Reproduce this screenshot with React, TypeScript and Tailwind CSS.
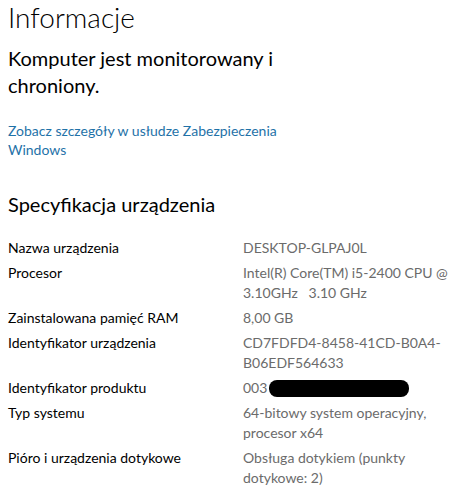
const specs: { label: string; value: string[]; redacted?: boolean }[] = [
  { label: "Nazwa urządzenia", value: ["DESKTOP-GLPAJ0L"] },
  { label: "Procesor", value: ["Intel(R) Core(TM) i5-2400 CPU @", "3.10GHz   3.10 GHz"] },
  { label: "Zainstalowana pamięć RAM", value: ["8,00 GB"] },
  { label: "Identyfikator urządzenia", value: ["CD7FDFD4-8458-41CD-B0A4-", "B06EDF564633"] },
  { label: "Identyfikator produktu", value: ["003"], redacted: true },
  { label: "Typ systemu", value: ["64-bitowy system operacyjny,", "procesor x64"] },
  { label: "Pióro i urządzenia dotykowe", value: ["Obsługa dotykiem (punkty", "dotykowe: 2)"] },
];

export default function App() {
  return (
    <div className="h-[495px] w-[456px] overflow-hidden bg-white pl-2 font-['Lato','Segoe_UI',sans-serif] text-black">
      <h1 className="text-[28px] font-light leading-[34px]">Informacje</h1>

      <p className="mt-[11px] text-[20px] leading-[27px]">
        Komputer jest monitorowany i
        <br />
        chroniony.
      </p>

      <a className="mt-[22px] block text-[14px] leading-[19px] text-[#1f72a8]" href="#">
        Zobacz szczegóły w usłudze Zabezpieczenia
        <br />
        Windows
      </a>

      <h2 className="mt-[32px] text-[20px] leading-[27px]">Specyfikacja urządzenia</h2>

      <div className="mt-[20px] flex flex-col gap-[5px] text-[14px] leading-[20px]">
        {specs.map((row) => (
          <div key={row.label} className="flex">
            <div className="w-[235px] shrink-0">{row.label}</div>
            <div className="whitespace-pre text-[#6b6b6b]">
              {row.redacted ? (
                <div className="flex items-center">
                  <span>{row.value[0]}</span>
                  <span className="ml-[2px] h-[17px] w-[140px] rounded-[8px] bg-black" />
                </div>
              ) : (
                row.value.map((line) => <div key={line}>{line}</div>)
              )}
            </div>
          </div>
        ))}
      </div>
    </div>
  );
}
